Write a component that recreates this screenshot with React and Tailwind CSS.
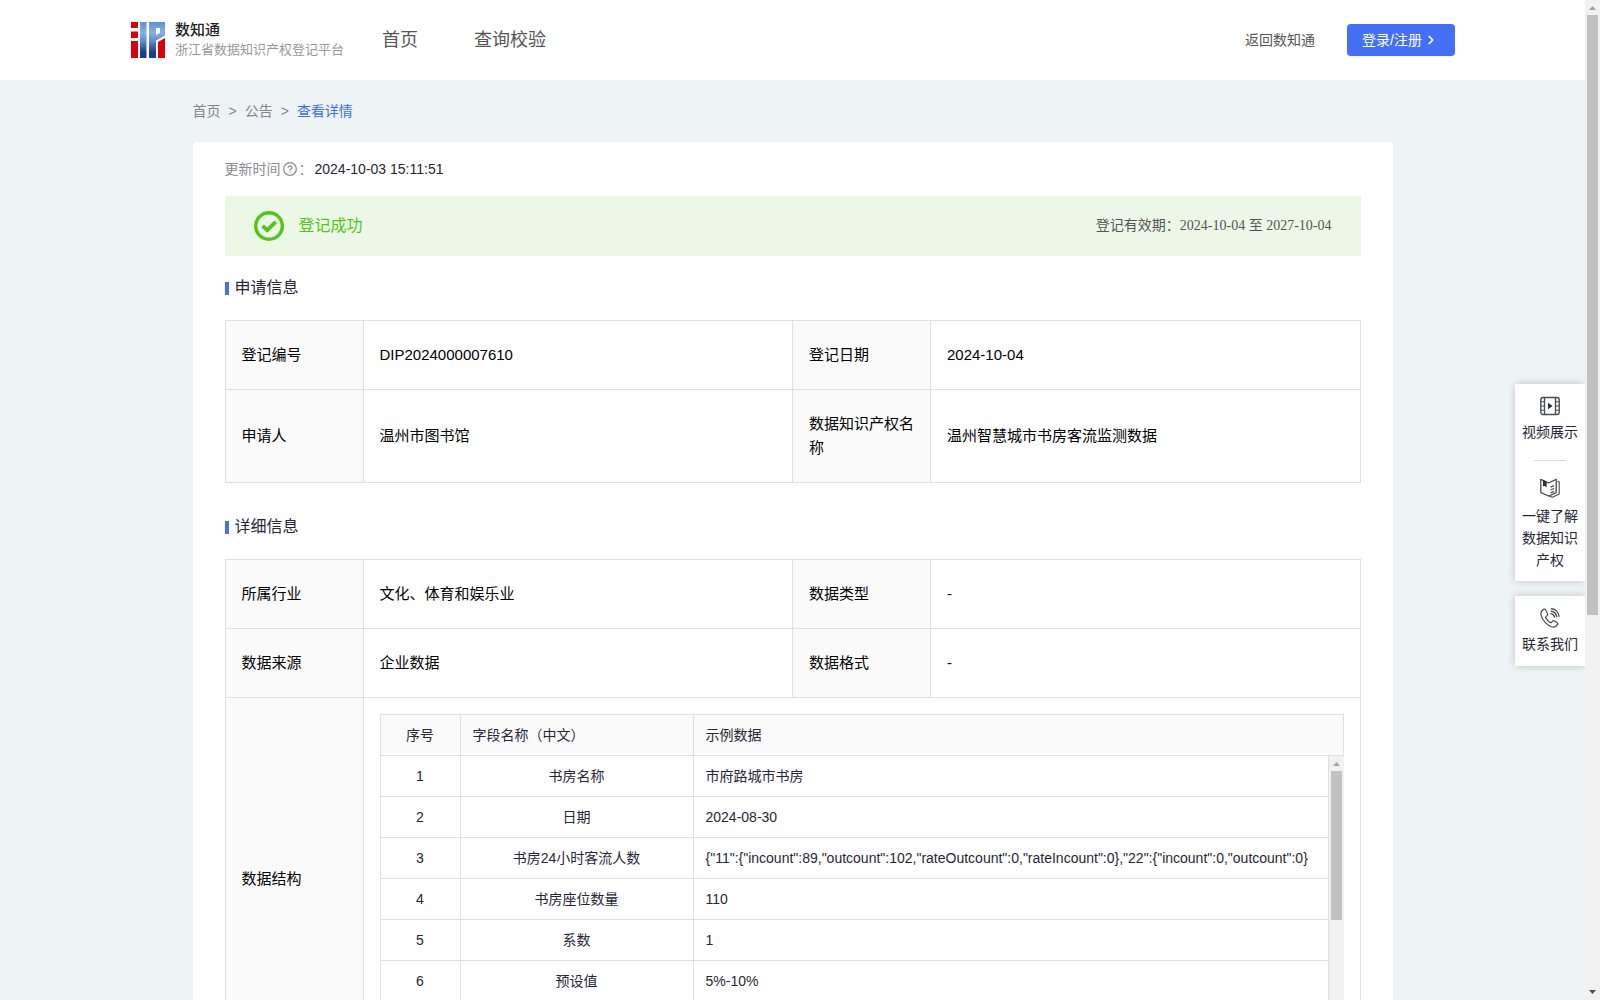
import { ChevronRight } from "lucide-react";

const fields = [
  ["书房名称", "市府路城市书房"],
  ["日期", "2024-08-30"],
  ["书房24小时客流人数", '{"11":{"incount":89,"outcount":102,"rateOutcount":0,"rateIncount":0},"22":{"incount":0,"outcount":0}'],
  ["书房座位数量", "110"],
  ["系数", "1"],
  ["预设值", "5%-10%"],
];

function Logo() {
  return (
    <svg viewBox="0 0 34 36" className="h-9 w-[34px]" aria-hidden="true">
      <defs>
        <linearGradient id="logoBlue" x1="0" y1="0" x2="0" y2="1">
          <stop offset="0" stopColor="#5f8fd0" />
          <stop offset="0.3" stopColor="#86b1e6" />
          <stop offset="0.55" stopColor="#5c86c8" />
          <stop offset="0.85" stopColor="#20398a" />
        </linearGradient>
      </defs>
      <path fill="#d6000f" d="M0 0h7v6H0zM0 9.500h7V16H0zM0 19h7v17H0zM27 20l7-4v20h-7z" />
      <path fill="url(#logoBlue)" d="M9 0h6.500v36H9zM18 0h16v13.500L25 18.500V36h-7zM25 6v7l4-2V6z" fillRule="evenodd" />
    </svg>
  );
}

function QuestionIcon() {
  return (
    <svg viewBox="0 0 14 14" className="size-3.5" fill="none" stroke="#8c8c92" aria-hidden="true">
      <circle cx="7" cy="7" r="6.3" strokeWidth="1.3" />
      <path d="M5.1 5.7a1.9 1.7 0 1 1 2.8 1.5c-.6.3-.9.6-.9 1.2M7 9.5v1.1" strokeWidth="1.3" />
    </svg>
  );
}

function CheckIcon() {
  return (
    <svg viewBox="0 0 30 30" className="size-[30px]" fill="none" stroke="#52c41a" aria-hidden="true">
      <circle cx="15" cy="15" r="13.3" strokeWidth="3.4" />
      <path d="M8.6 14.8l4.6 4.4 8.6-8.4" strokeWidth="3.8" />
    </svg>
  );
}

function VideoIcon() {
  return (
    <svg viewBox="0 0 20 20" className="size-5" fill="none" stroke="#4a4b55" strokeWidth="1.4" aria-hidden="true">
      <rect x="0.8" y="1.5" width="18.4" height="17" rx="2.2" />
      <path d="M4.500 1.500v17M15.500 1.500v17" />
      <path d="M.8 5.800h3.700M.8 10h3.700M.8 14.200h3.700M15.500 5.800h3.700M15.500 10h3.700M15.500 14.200h3.700" strokeWidth="1.1" />
      <path d="M8 6.800l4.600 3.200L8 13.200z" fill="#2b2c38" stroke="none" />
    </svg>
  );
}

function BookIcon() {
  return (
    <svg viewBox="0 0 20 20" className="size-5" fill="none" stroke="#4a4b55" strokeWidth="1.3" strokeLinejoin="round" aria-hidden="true">
      <path d="M.8 1.300L8.600 5l7.600-3.700v13.300L8.800 18 .8 14.600z" />
      <path d="M17.400 3.200l1.800.6V16l-6.800 3.300-3.600-1.300" strokeWidth="1.100" />
      <path d="M10.600 9.200l3.400-1.500M10.600 12l3.400-1.500M10.600 14.800l3.400-1.500" />
      <path d="M3 1.800l3.600 1.700v6L4.800 8 3 8.200z" fill="#2b2c38" stroke="none" />
    </svg>
  );
}

function PhoneIcon() {
  return (
    <svg viewBox="0 0 20 20" className="size-5" fill="none" stroke="#4a4b55" strokeWidth="1.2" strokeLinecap="round" strokeLinejoin="round" aria-hidden="true">
      <path d="M3.6 1.4C1.4 2.6.4 4.6 1.2 7.6c1.3 4.800 5.600 9.600 10.400 11.200 2.900.9 4.800-.2 6-2.400.5-1-.1-1.600-.9-2.100l-2.300-1.400c-.9-.5-1.500-.3-2.100.4l-.8 1c-.5.500-.9.500-1.500.1-1.800-1.200-3.200-2.700-4.200-4.500-.3-.6-.3-1 .3-1.500l.9-.7c.7-.6.9-1.200.5-2L5.900 2.200C5.300 1.200 4.600.9 3.600 1.400z" />
      <path d="M10.900 5.600c2 .4 3.200 1.500 3.600 3.400M11.200 3.200c3.100.4 5.100 2.500 5.500 5.500M11.500.8c4.100.4 7.100 3.500 7.500 7.400" strokeWidth="1.400" />
    </svg>
  );
}

function SectionTitle({ children }) {
  return (
    <h2 className="mb-5 flex h-6 items-center gap-1.5 text-base text-[#272636]">
      <span className="h-[13px] w-1 bg-[#4570f6]" />
      {children}
    </h2>
  );
}

function Label({ children, first }) {
  return (
    <th
      scope="row"
      className={`border-r border-b border-[#e0e0e0] bg-[#fafafa] px-4 py-[22px] text-left font-normal ${first ? "border-l" : ""}`}
    >
      {children}
    </th>
  );
}

function Value({ children }) {
  return <td className="border-r border-b border-[#e0e0e0] px-4 py-[22px]">{children}</td>;
}

function InfoTable({ children }) {
  return (
    <table className="w-full table-fixed border-separate border-spacing-0 border-t border-[#e0e0e0] text-[15px] leading-6 text-black">
      <colgroup>
        <col className="w-[139px]" />
        <col />
        <col className="w-[138px]" />
        <col />
      </colgroup>
      <tbody>{children}</tbody>
    </table>
  );
}

function FieldTable() {
  const head = "h-[42px] border-t border-r border-b border-[#e0e0e0] bg-[#fafafa] px-3 font-normal";
  const cell = "h-[41px] border-r border-b border-[#e0e0e0] px-3";
  return (
    <div className="text-sm text-[#272636]">
      <table className="w-full table-fixed border-separate border-spacing-0">
        <thead>
          <tr>
            <th className={`${head} w-[81px] border-l`}>序号</th>
            <th className={`${head} w-[233px] text-left`}>字段名称（中文）</th>
            <th className={`${head} text-left`}>示例数据</th>
          </tr>
        </thead>
      </table>
      <div className="flex h-72">
        <div className="min-w-0 flex-1 overflow-hidden">
          <table className="w-full table-fixed border-separate border-spacing-0">
            <tbody>
              {fields.map(([name, sample], i) => (
                <tr key={name}>
                  <td className={`${cell} w-[81px] border-l text-center`}>{i + 1}</td>
                  <td className={`${cell} w-[233px] text-center`}>{name}</td>
                  <td className={`${cell} whitespace-nowrap`}>{sample}</td>
                </tr>
              ))}
            </tbody>
          </table>
        </div>
        <Scrollbar thumb="h-[149px]" />
      </div>
    </div>
  );
}

function Scrollbar({ thumb }) {
  return (
    <div className="flex w-[15px] shrink-0 flex-col items-center bg-[#f1f1f1]" aria-hidden="true">
      <svg viewBox="0 0 15 15" className="size-[15px] shrink-0">
        <path d="M4 10h7L7.500 6z" fill="#a3a3a3" />
      </svg>
      <div className={`w-[11px] bg-[#c1c1c1] ${thumb}`} />
      <svg viewBox="0 0 15 15" className="mt-auto size-[15px] shrink-0">
        <path d="M4 5h7L7.500 9z" fill="#505050" />
      </svg>
    </div>
  );
}

export default function App() {
  return (
    <div className="flex h-screen bg-[#eef3f6] font-['Liberation_Sans','Noto_Sans_CJK_SC',sans-serif]">
      <div className="relative min-w-0 flex-1 overflow-hidden">
        <header className="flex h-20 items-center bg-white px-[130px] text-[#555]">
          <a href="#" className="ml-px flex items-center gap-2.5">
            <Logo />
            <span className="flex flex-col">
              <span className="text-[15px] leading-5 font-medium text-[#222]">数知通</span>
              <span className="text-[13px] leading-5 text-[#999]">浙江省数据知识产权登记平台</span>
            </span>
          </a>
          <nav className="ml-[38px] flex gap-14 text-lg">
            <a href="#">首页</a>
            <a href="#">查询校验</a>
          </nav>
          <a href="#" className="ml-auto text-sm">返回数知通</a>
          <button className="ml-8 flex h-8 w-[108px] items-center gap-0.5 rounded-sm bg-[#4570f6] pl-[15px] text-sm text-white shadow-[0_2px_0_rgba(0,0,0,0.045)]">
            登录/注册
            <ChevronRight className="size-3.5" strokeWidth={3} />
          </button>
        </header>

        <div className="mx-auto w-full max-w-[1200px]">
          <nav className="flex h-[62px] items-center gap-2 text-sm text-[#86868b]">
            <a href="#">首页</a>
            <span>&gt;</span>
            <a href="#">公告</a>
            <span>&gt;</span>
            <a href="#" className="text-[#3d6df5]">查看详情</a>
          </nav>
          <main className="rounded-t bg-white px-8 pt-4 pb-8">
            <div className="flex h-[22px] items-center text-sm text-[#8c8c92]">
              更新时间
              <span className="mx-0.5"><QuestionIcon /></span>
              <span>：</span>
              <span className="ml-0.5 text-[#272636]">2024-10-03 15:11:51</span>
            </div>
            <div className="mt-4 flex h-[60px] items-center justify-between bg-[#ebf8e6] px-[29px]">
              <div className="flex items-center gap-[15px] text-base text-[#52c41a]">
                <CheckIcon />
                登记成功
              </div>
              <p className="font-['Liberation_Serif','Noto_Sans_CJK_SC',serif] text-sm text-[#555]">
                登记有效期：2024-10-04 至 2027-10-04
              </p>
            </div>

            <section className="mt-5">
              <SectionTitle>申请信息</SectionTitle>
              <InfoTable>
                <tr>
                  <Label first>登记编号</Label>
                  <Value>DIP2024000007610</Value>
                  <Label>登记日期</Label>
                  <Value>2024-10-04</Value>
                </tr>
                <tr>
                  <Label first>申请人</Label>
                  <Value>温州市图书馆</Value>
                  <Label>数据知识产权名称</Label>
                  <Value>温州智慧城市书房客流监测数据</Value>
                </tr>
              </InfoTable>
            </section>

            <section className="mt-8">
              <SectionTitle>详细信息</SectionTitle>
              <InfoTable>
                <tr>
                  <Label first>所属行业</Label>
                  <Value>文化、体育和娱乐业</Value>
                  <Label>数据类型</Label>
                  <Value>-</Value>
                </tr>
                <tr>
                  <Label first>数据来源</Label>
                  <Value>企业数据</Value>
                  <Label>数据格式</Label>
                  <Value>-</Value>
                </tr>
                <tr>
                  <Label first>数据结构</Label>
                  <td colSpan={3} className="border-r border-b border-[#e0e0e0] p-4">
                    <FieldTable />
                  </td>
                </tr>
              </InfoTable>
            </section>
          </main>
        </div>

        <aside className="absolute top-96 right-0 flex w-[70px] flex-col gap-[15px] text-center text-sm leading-[22px] text-[#272636]">
          <div className="bg-white px-1.5 pb-2.5 shadow-[0_0_8px_rgba(0,0,0,0.2)]">
            <a href="#" className="flex flex-col items-center gap-[5px] pt-3 pb-[17px]">
              <VideoIcon />
              视频展示
            </a>
            <hr className="mx-auto w-8 border-[#dcdcdc]" />
            <a href="#" className="flex flex-col items-center gap-[7px] pt-[17px]">
              <BookIcon />
              一键了解数据知识产权
            </a>
          </div>
          <a href="#" className="flex flex-col items-center gap-[5px] bg-white pt-3 pb-[11px] shadow-[0_0_8px_rgba(0,0,0,0.2)]">
            <PhoneIcon />
            联系我们
          </a>
        </aside>
      </div>
      <Scrollbar thumb="h-[60%]" />
    </div>
  );
}
